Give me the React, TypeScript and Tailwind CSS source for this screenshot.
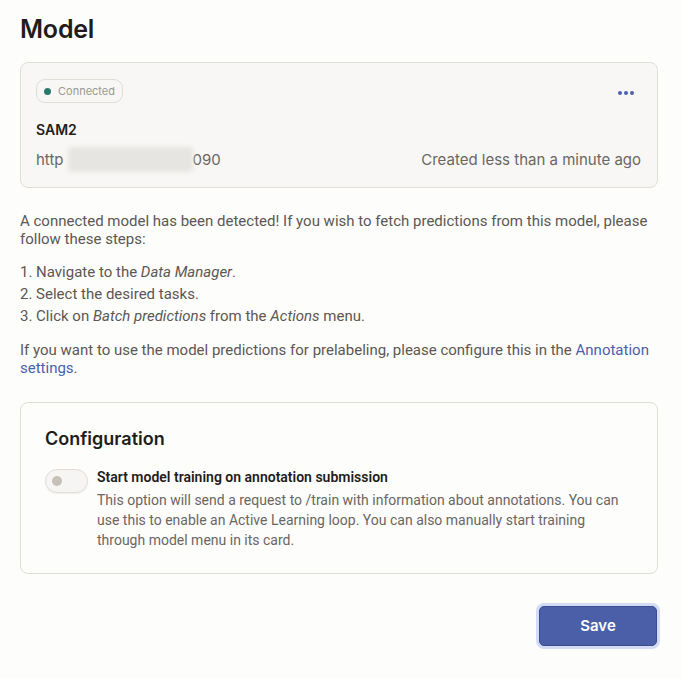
import React from "react";

// model settings page — connected model card + configuration block

const HEAD = { fontFamily: "Inter, 'Noto Sans', sans-serif" };
const BODY = { fontFamily: "Roboto, 'Liberation Sans', sans-serif" };

function ModelCard() {
  return (
    <div className="rounded-lg border border-[#e1ded8] bg-[#f8f7f6] px-[15px] pt-4 pb-[15px]" style={HEAD}>
      <div className="flex items-start justify-between">
        <span className="inline-flex h-[24px] items-center gap-[7px] rounded-[9px] border border-[#e1ded8] px-[7px] text-[11px] text-[#9d978f]">
          <span className="h-[7px] w-[7px] rounded-full bg-[#2b7a6e]" />
          Connected
        </span>
        <button className="mt-[12px] mr-[8px] flex gap-[2px]">
          <span className="h-[4px] w-[4px] rounded-full bg-[#4c61b0]" />
          <span className="h-[4px] w-[4px] rounded-full bg-[#4c61b0]" />
          <span className="h-[4px] w-[4px] rounded-full bg-[#4c61b0]" />
        </button>
      </div>
      <div className="mt-[18px] text-[14px] font-semibold leading-[18px] text-[#1f1c1a]">SAM2</div>
      <div className="mt-[8px] flex items-center justify-between text-[15px] leading-[20px] text-[#6b6661]">
        <span className="flex items-center">
          http
          <span className="ml-[4px] inline-block h-[25px] w-[125px] rounded-sm bg-[#e7e5e2] blur-[2px]" />
          090
        </span>
        <span className="mr-[1px]">Created less than a minute ago</span>
      </div>
    </div>
  );
}

function Toggle() {
  return (
    <div className="mt-[1px] flex h-[24px] w-[43px] shrink-0 items-center rounded-full border border-[#e1ded8] bg-[#f6f5f3] px-[6px] shadow-[0_1px_2px_rgba(0,0,0,0.06)]">
      <span className="h-[10px] w-[10px] rounded-full bg-[#c5c0b8]" />
    </div>
  );
}

export default function App() {
  return (
    <div className="min-h-[678px] w-full bg-[#fdfdfc] pt-[14px] pr-6 pl-5">
      <h1 className="text-[25px] font-semibold leading-[30px] tracking-[-0.2px] text-[#1f1c1a]" style={HEAD}>
        Model
      </h1>

      <div className="mt-[18px]">
        <ModelCard />
      </div>

      <div className="mt-[24px] text-[15px] leading-[18px] text-[#5c5752]" style={BODY}>
        <p>
          A connected model has been detected! If you wish to fetch predictions from this model, please
          follow these steps:
        </p>
        <div className="mt-[13px] leading-[22px]">
          <p>
            1. Navigate to the <em>Data Manager</em>.
          </p>
          <p>2. Select the desired tasks.</p>
          <p>
            3. Click on <em>Batch predictions</em> from the <em>Actions</em> menu.
          </p>
        </div>
        <p className="mt-[14px]">
          If you want to use the model predictions for prelabeling, please configure this in the{" "}
          <a href="#" className="text-[#4a5fad]">
            Annotation settings
          </a>
          .
        </p>
      </div>

      <div className="mt-[25px] rounded-lg border border-[#e1ded8] bg-[#fdfdfc] px-6 pt-[24px] pb-[23px]">
        <h2 className="text-[18px] font-semibold leading-[24px] text-[#1f1c1a]" style={HEAD}>
          Configuration
        </h2>
        <div className="mt-[17px] flex gap-[9px]">
          <Toggle />
          <div style={BODY}>
            <div className="text-[14px] font-semibold leading-[18px] text-[#1f1c1a]">
              Start model training on annotation submission
            </div>
            <p className="mt-[4px] text-[14px] leading-[20px] text-[#6b6661]">
              This option will send a request to /train with information about annotations. You can use
              this to enable an Active Learning loop. You can also manually start training through model
              menu in its card.
            </p>
          </div>
        </div>
      </div>

      <div className="mt-[32px] flex justify-end">
        <button
          className="mr-[1px] h-[40px] w-[118px] rounded-[5px] border border-[#3b4d8f] bg-[#4a5fa8] text-[15px] font-semibold text-white ring-[3px] ring-[#d4dbf7]"
          style={HEAD}
        >
          Save
        </button>
      </div>
    </div>
  );
}
